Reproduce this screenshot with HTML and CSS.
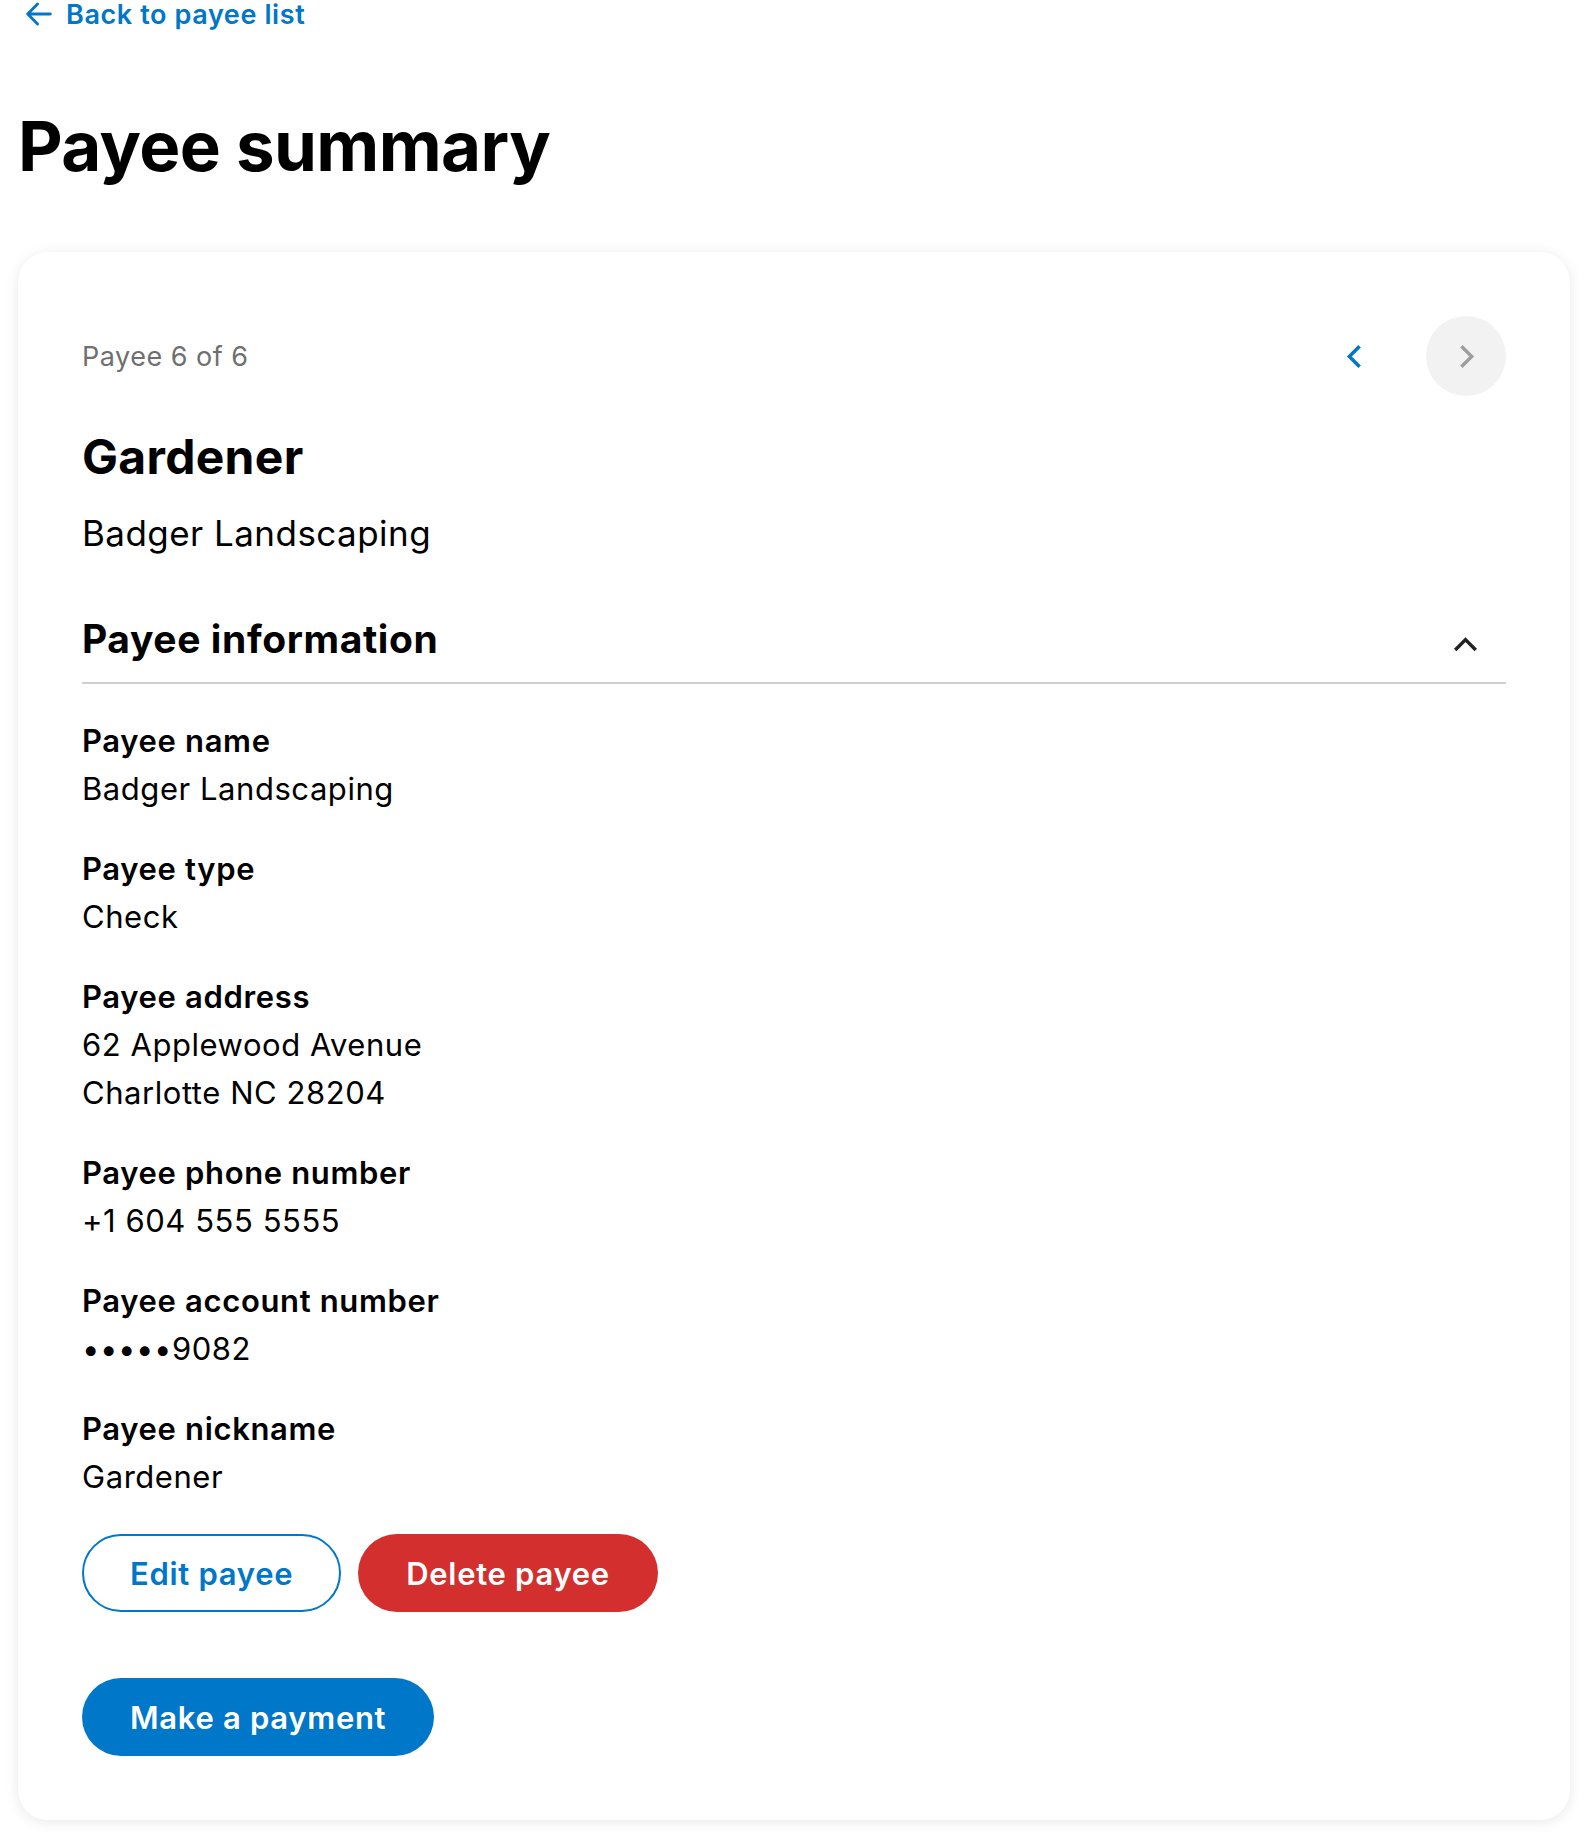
FILE: index.html
```html
<!DOCTYPE html>
<html lang="en">
<head>
<meta charset="utf-8">
<title>Payee summary</title>
<link rel="stylesheet" href="styles.css">
</head>
<body>
<main class="page">
  <a class="back-link" href="#">
    <svg class="back-icon" viewBox="0 0 24 24" width="34" height="34" aria-hidden="true"><path d="M20 12H4M11 5l-7 7 7 7" fill="none" stroke="currentColor" stroke-width="2" stroke-linecap="round" stroke-linejoin="round"/></svg>
    <span>Back to payee list</span>
  </a>
  <h1 class="page-title">Payee summary</h1>

  <section class="card">
    <div class="card-header">
      <span class="counter">Payee 6 of 6</span>
      <div class="pager">
        <button class="pager-btn pager-prev" aria-label="Previous payee">
          <svg viewBox="0 0 24 24" width="31" height="31"><path d="M15 5l-7 7 7 7" fill="none" stroke="currentColor" stroke-width="2.7" stroke-linecap="square"/></svg>
        </button>
        <button class="pager-btn pager-next" aria-label="Next payee">
          <svg viewBox="0 0 24 24" width="31" height="31"><path d="M9 5l7 7-7 7" fill="none" stroke="currentColor" stroke-width="2.7" stroke-linecap="square"/></svg>
        </button>
      </div>
    </div>

    <h2 class="nickname">Gardener</h2>
    <p class="payee-name">Badger Landscaping</p>

    <div class="section-head">
      <h3 class="section-title">Payee information</h3>
      <svg class="section-chevron" viewBox="0 0 24 24" width="31" height="31"><path d="M5 16l7-7 7 7" fill="none" stroke="currentColor" stroke-width="2.7" stroke-linecap="square"/></svg>
    </div>

    <dl class="details">
      <div class="detail">
        <dt>Payee name</dt>
        <dd>Badger Landscaping</dd>
      </div>
      <div class="detail">
        <dt>Payee type</dt>
        <dd>Check</dd>
      </div>
      <div class="detail">
        <dt>Payee address</dt>
        <dd>62 Applewood Avenue<br>Charlotte NC 28204</dd>
      </div>
      <div class="detail">
        <dt>Payee phone number</dt>
        <dd>+1 604 555 5555</dd>
      </div>
      <div class="detail">
        <dt>Payee account number</dt>
        <dd>•••••9082</dd>
      </div>
      <div class="detail">
        <dt>Payee nickname</dt>
        <dd>Gardener</dd>
      </div>
    </dl>

    <div class="actions">
      <button class="btn btn-outline">Edit payee</button>
      <button class="btn btn-danger">Delete payee</button>
    </div>
    <div class="primary-row">
      <button class="btn btn-primary">Make a payment</button>
    </div>
  </section>
</main>
</body>
</html>
```

FILE: styles.css
```css
* { box-sizing: border-box; }

html, body {
  margin: 0;
  padding: 0;
  background: #ffffff;
}

body {
  font-family: Inter, "Noto Sans", "Liberation Sans", sans-serif;
  color: #000000;
}

.page {
  padding: 0 18px 27px 18px;
}

.back-link {
  display: flex;
  align-items: center;
  gap: 10px;
  height: 28px;
  color: #0077c8;
  text-decoration: none;
  font-size: 27px;
  font-weight: 600;
  letter-spacing: 0.6px;
  padding-left: 4px;
}

.back-icon { flex: none; }

.page-title {
  margin: 76px 0 0 0;
  font-size: 69px;
  line-height: 84px;
  font-weight: 700;
  letter-spacing: -0.6px;
}

.card {
  margin-top: 64px;
  background: #ffffff;
  border-radius: 30px;
  box-shadow: 0 2px 14px rgba(0, 0, 0, 0.09);
  padding: 64px;
}

.card-header {
  display: flex;
  align-items: center;
  justify-content: space-between;
  height: 80px;
}

.counter {
  font-size: 27px;
  letter-spacing: 0.5px;
  color: #6f6f6f;
}

.pager {
  display: flex;
  gap: 32px;
}

.pager-btn {
  width: 80px;
  height: 80px;
  border-radius: 50%;
  border: none;
  padding: 0;
  display: flex;
  align-items: center;
  justify-content: center;
  background: transparent;
}

.pager-prev { color: #0077c8; }
.pager-next { background: #f2f2f2; color: #9e9e9e; }

.nickname {
  margin: 31px 0 0 0;
  font-size: 48px;
  line-height: 60px;
  font-weight: 700;
  letter-spacing: 0.3px;
}

.payee-name {
  margin: 22px 0 0 0;
  font-size: 35px;
  line-height: 48px;
  letter-spacing: 0.45px;
}

.section-head {
  margin-top: 58px;
  display: flex;
  align-items: center;
  justify-content: space-between;
  padding: 0 25px 19px 0;
  border-bottom: 2px solid #d0d0d0;
}

.section-title {
  margin: 0;
  font-size: 39px;
  line-height: 48px;
  font-weight: 700;
  letter-spacing: 0.6px;
}

.section-chevron { color: #222222; margin-top: 8px; }

.details {
  margin: 33px 0 0 0;
  display: flex;
  flex-direction: column;
  gap: 32px;
}

.detail dt {
  font-size: 31px;
  line-height: 48px;
  font-weight: 600;
  letter-spacing: 0.65px;
}

.detail dd {
  margin: 0;
  font-size: 31px;
  line-height: 48px;
  letter-spacing: 0.55px;
}

.actions {
  margin-top: 33px;
  display: flex;
  gap: 17px;
}

.primary-row {
  margin-top: 66px;
  display: flex;
}

.btn {
  height: 78px;
  border-radius: 39px;
  padding: 0 46px;
  font-family: inherit;
  font-size: 31px;
  font-weight: 600;
  letter-spacing: 0.7px;
  border: 2px solid transparent;
}

.btn-outline {
  background: #ffffff;
  border-color: #0077c8;
  color: #0077c8;
}

.btn-danger {
  background: #d32f2f;
  color: #ffffff;
}

.btn-primary {
  background: #0077c8;
  color: #ffffff;
}
```
